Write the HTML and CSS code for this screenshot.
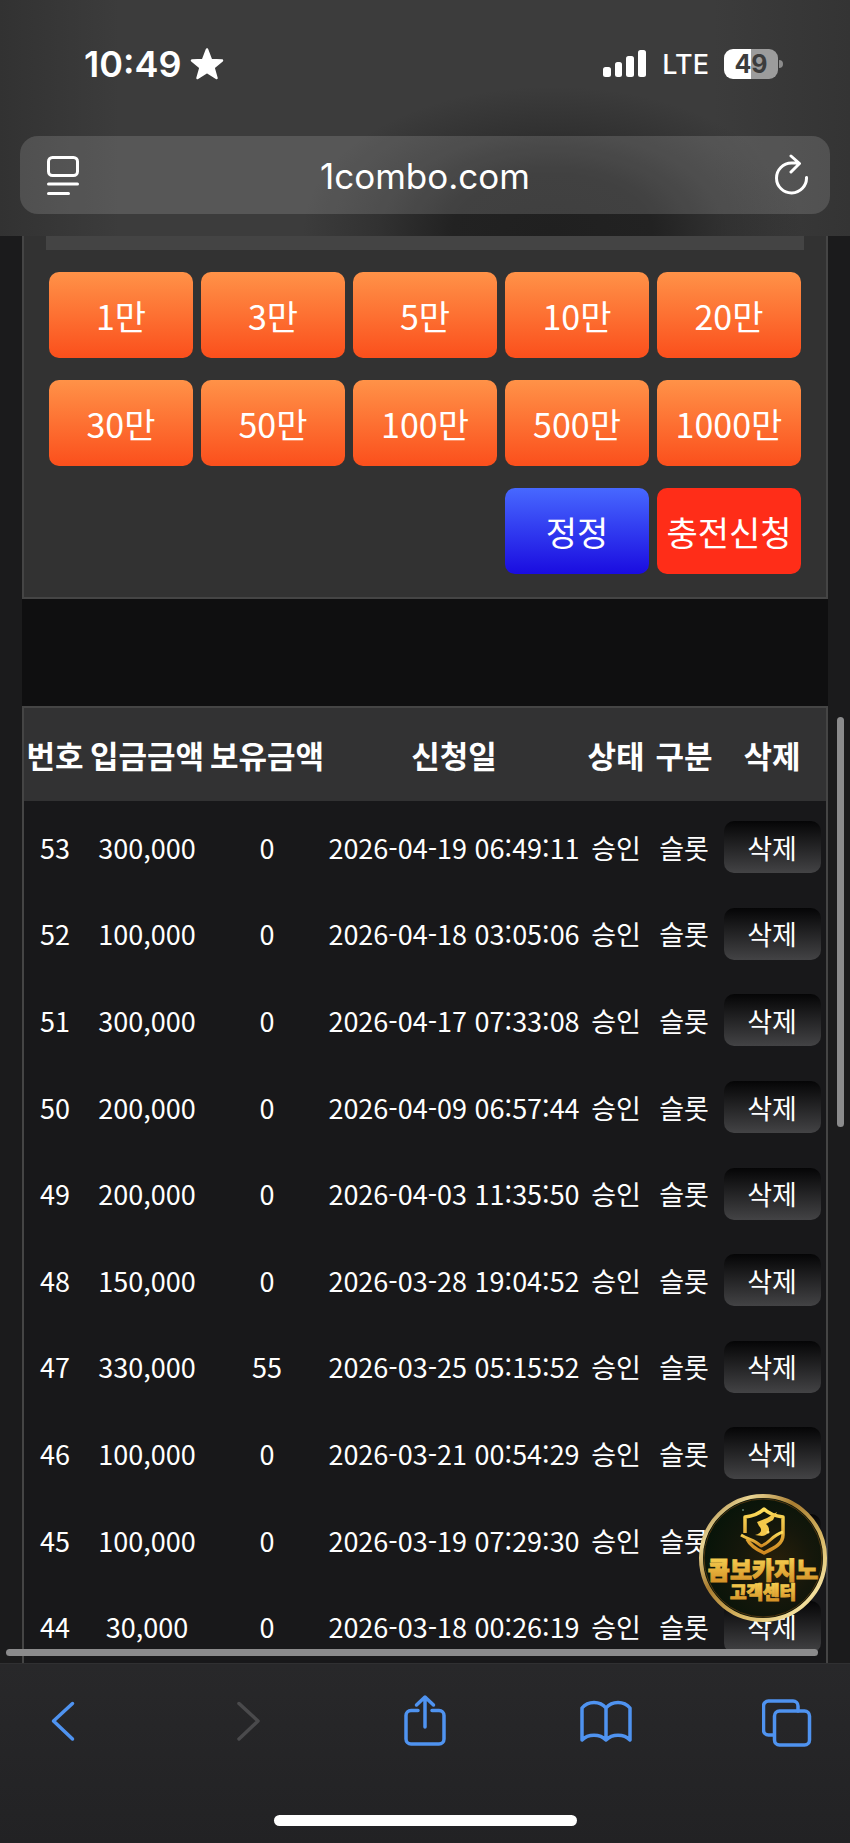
FILE: index.html
```html
<!DOCTYPE html>
<html lang="ko">
<head>
  <meta charset="UTF-8">
  <meta name="viewport" content="width=device-width, initial-scale=1.0">
  <title>1combo.com</title>
  <link rel="stylesheet" href="styles.css">
</head>
<body>
<header class="chrome">
  <div class="status">
    <div class="status-left">
      <span class="time">10:49</span>
      <svg width="34" height="34" viewBox="0 0 34 34"><path d="M17 2.500l4 10.500 11 .500-8.500 7 3 10.500L17 25 7.500 31l3-10.500L2 13.500 13 13z" fill="#fff" stroke="#fff" stroke-width="2.500" stroke-linejoin="round"/></svg>
    </div>
    <div class="status-right">
      <svg width="43" height="28" viewBox="0 0 43 28" fill="#fff">
        <rect x="0" y="17" width="8" height="10" rx="2.500"/>
        <rect x="12" y="12" width="7" height="15" rx="2.500"/>
        <rect x="23" y="6" width="8" height="21" rx="2.500"/>
        <rect x="35" y="0" width="8" height="27" rx="2.500"/>
      </svg>
      <span class="network">LTE</span>
      <span class="battery">49</span>
    </div>
  </div>
  <div class="address">
    <button class="icon-btn" aria-label="페이지 메뉴">
      <svg width="34" height="42" viewBox="0 0 34 42" fill="none" stroke="#fff" stroke-width="3" stroke-linecap="round"><rect x="2.500" y="3.500" width="29" height="18" rx="4"/><path d="M2.500 30h29M2.500 39.500h20"/></svg>
    </button>
    <input class="url" type="text" value="1combo.com" aria-label="주소">
    <button class="icon-btn" aria-label="새로고침">
      <svg width="34" height="42" viewBox="0 0 34 42" fill="none" stroke="#fff" stroke-width="3" stroke-linecap="round" stroke-linejoin="round"><path d="M32.500 23.500a15 15 0 1 1-15-14.500h7M17 2l8.500 7.500-8.500 8.500"/></svg>
    </button>
  </div>
</header>

<main class="page">
  <div class="sheet">
    <section class="panel">
      <div class="field"></div>
      <div class="amounts">
        <button class="btn">1만</button>
        <button class="btn">3만</button>
        <button class="btn">5만</button>
        <button class="btn">10만</button>
        <button class="btn">20만</button>
        <button class="btn">30만</button>
        <button class="btn">50만</button>
        <button class="btn">100만</button>
        <button class="btn">500만</button>
        <button class="btn">1000만</button>
        <button class="btn btn-reset">정정</button>
        <button class="btn btn-submit">충전신청</button>
      </div>
    </section>

    <table class="history">
      <colgroup>
        <col class="c-no"><col class="c-amount"><col class="c-hold"><col class="c-date"><col class="c-state"><col class="c-type"><col>
      </colgroup>
      <thead>
        <tr><th>번호</th><th>입금금액</th><th>보유금액</th><th>신청일</th><th>상태</th><th>구분</th><th>삭제</th></tr>
      </thead>
      <tbody>
        <tr><td>53</td><td>300,000</td><td>0</td><td>2026-04-19 06:49:11</td><td>승인</td><td>슬롯</td><td><button class="del">삭제</button></td></tr>
        <tr><td>52</td><td>100,000</td><td>0</td><td>2026-04-18 03:05:06</td><td>승인</td><td>슬롯</td><td><button class="del">삭제</button></td></tr>
        <tr><td>51</td><td>300,000</td><td>0</td><td>2026-04-17 07:33:08</td><td>승인</td><td>슬롯</td><td><button class="del">삭제</button></td></tr>
        <tr><td>50</td><td>200,000</td><td>0</td><td>2026-04-09 06:57:44</td><td>승인</td><td>슬롯</td><td><button class="del">삭제</button></td></tr>
        <tr><td>49</td><td>200,000</td><td>0</td><td>2026-04-03 11:35:50</td><td>승인</td><td>슬롯</td><td><button class="del">삭제</button></td></tr>
        <tr><td>48</td><td>150,000</td><td>0</td><td>2026-03-28 19:04:52</td><td>승인</td><td>슬롯</td><td><button class="del">삭제</button></td></tr>
        <tr><td>47</td><td>330,000</td><td>55</td><td>2026-03-25 05:15:52</td><td>승인</td><td>슬롯</td><td><button class="del">삭제</button></td></tr>
        <tr><td>46</td><td>100,000</td><td>0</td><td>2026-03-21 00:54:29</td><td>승인</td><td>슬롯</td><td><button class="del">삭제</button></td></tr>
        <tr><td>45</td><td>100,000</td><td>0</td><td>2026-03-19 07:29:30</td><td>승인</td><td>슬롯</td><td><button class="del">삭제</button></td></tr>
        <tr><td>44</td><td>30,000</td><td>0</td><td>2026-03-18 00:26:19</td><td>승인</td><td>슬롯</td><td><button class="del">삭제</button></td></tr>
      </tbody>
    </table>
  </div>

  <div class="scroll-y"></div>
  <div class="scroll-x"></div>

  <a class="support" href="#" aria-label="콤보카지노 고객센터">
    <svg width="130" height="130" viewBox="0 0 130 130">
      <defs>
        <linearGradient id="ring" x1="0" y1="0" x2="1" y2="1">
          <stop offset="0" stop-color="#8a6424"/>
          <stop offset=".2" stop-color="#e9d493"/>
          <stop offset=".4" stop-color="#a87c30"/>
          <stop offset=".65" stop-color="#d9b865"/>
          <stop offset=".85" stop-color="#f3df9c"/>
          <stop offset="1" stop-color="#a5782a"/>
        </linearGradient>
        <linearGradient id="gold" x1="0" y1="0" x2="0" y2="1">
          <stop offset="0" stop-color="#ffe05c"/>
          <stop offset="1" stop-color="#cf8820"/>
        </linearGradient>
        <radialGradient id="felt" cx=".6" cy=".55" r=".6">
          <stop offset="0" stop-color="#29200a"/>
          <stop offset=".5" stop-color="#15170b"/>
          <stop offset="1" stop-color="#071409"/>
        </radialGradient>
      </defs>
      <circle cx="65" cy="65" r="62" fill="url(#felt)" stroke="url(#ring)" stroke-width="4"/>
      <circle cx="65" cy="65" r="59" fill="none" stroke="#4d3510"/>
      <g fill="none" stroke="url(#gold)" stroke-width="3.500" stroke-linejoin="round">
        <path d="M47 40V24c8-1 14-3 19-8 5 5 11 7 19 8v18c0 9-9 13-19 18-9-4-14-8-17-14"/>
        <path d="M43 42c8 5 13 4 20 11 8-2 11-11 22-14" stroke-width="3"/>
      </g>
      <path d="M59 29l10-4 10-6-4 8-7 4c5 4 4 11-4 12l-7-1c6-1 8-5 4-9z" fill="#f4c84a"/>
      <circle cx="70" cy="39" r="1.500" fill="#ffe27a"/>
      <circle cx="45" cy="17" r="1" fill="#5c7a6a"/>
      <text class="support-name" x="65" y="86">콤보카지노</text>
      <text class="support-desc" x="65" y="106">고객센터</text>
    </svg>
  </a>
</main>

<footer class="toolbar">
  <nav class="tools">
    <button class="icon-btn" aria-label="뒤로">
      <svg width="50" height="54" viewBox="0 0 50 54"><path d="M34.500 9.500L15.500 27l19 18"/></svg>
    </button>
    <button class="icon-btn" aria-label="앞으로" disabled>
      <svg width="50" height="54" viewBox="0 0 50 54"><path d="M21 9.500L40 27 21 45"/></svg>
    </button>
    <button class="icon-btn" aria-label="공유">
      <svg width="50" height="54" viewBox="0 0 50 54"><path d="M20 16.500h-7a5 5 0 0 0-5 5V45a5 5 0 0 0 5 5h28a5 5 0 0 0 5-5V21.500a5 5 0 0 0-5-5h-7M27 33V4M18.500 11L27 3l8.500 8"/></svg>
    </button>
    <button class="icon-btn" aria-label="책갈피">
      <svg width="54" height="54" viewBox="0 0 54 54"><path d="M28 14C22 6.500 10 6.500 4 14v32c6-6.500 18-6.500 24 0 6-6.500 18-6.500 24 0V14c-6-7.500-18-7.500-24 0zv32"/></svg>
    </button>
    <button class="icon-btn" aria-label="탭">
      <svg width="50" height="54" viewBox="0 0 50 54"><rect x="12.500" y="17" width="35" height="34" rx="5"/><path d="M12 41H6.500a5 5 0 0 1-5-5V12a5 5 0 0 1 5-5H31a5 5 0 0 1 5 5v5"/></svg>
    </button>
  </nav>
  <div class="home"></div>
</footer>
</body>
</html>
```
FILE: styles.css
```css
* {
  box-sizing: border-box;
}
body {
  margin: 0;
  height: 100vh;
  display: flex;
  flex-direction: column;
  overflow: hidden;
  background-color: #1b1b1c;
  color: #fff;
  font-family: "Noto Sans CJK KR", sans-serif;
}
button {
  margin: 0;
  padding: 0;
  border: none;
  color: #fff;
  font-family: inherit;
  cursor: pointer;
}
svg {
  display: block;
}
.icon-btn {
  background: none;
}

/* browser top */
.chrome {
  padding-bottom: 22px;
  background: radial-gradient(ellipse 250px 145px at 65% 98%, #202020 0%, #222222 40%, rgba(34, 34, 34, 0.4) 70%, rgba(34, 34, 34, 0) 100%),
    linear-gradient(to right, #323232 0, #3c3c3c 14%, #3c3c3c 84%, #343434 100%);
  font-family: Inter, sans-serif;
}
.status {
  display: flex;
  justify-content: space-between;
  align-items: center;
  height: 128px;
  padding: 0 72px 0 84px;
}
.status-left,
.status-right {
  display: flex;
  align-items: center;
}
.status-left {
  gap: 9px;
}
.time {
  font-size: 36px;
  font-weight: 600;
}
.network {
  margin: 0 15px 0 16px;
  font-size: 27px;
  font-weight: 500;
}
.battery {
  position: relative;
  width: 54px;
  height: 30px;
  border-radius: 9px;
  background: linear-gradient(to right, #fff 50%, #9c9c9c 50%);
  color: #3c3c3c;
  font-size: 25px;
  font-weight: 700;
  line-height: 30px;
  text-align: center;
}
.battery::after {
  content: "";
  position: absolute;
  right: -5px;
  top: 11px;
  width: 4px;
  height: 8px;
  border-radius: 0 4px 4px 0;
  background-color: #8c8c8c;
}
.address {
  display: flex;
  align-items: center;
  height: 78px;
  margin: 8px 20px 0;
  padding: 0 22px 0 26px;
  border-radius: 18px;
  background-color: rgba(255, 255, 255, 0.14);
}
.url {
  flex: 1;
  min-width: 0;
  padding: 2px 4px 0 0;
  border: none;
  outline: none;
  background: none;
  color: #fff;
  font-family: inherit;
  font-size: 35px;
  text-align: center;
}

/* page */
.page {
  position: relative;
  flex: 1;
  min-height: 0;
  overflow: hidden;
}
.sheet {
  margin: 0 22px;
  background-color: #0f0f10;
}
.panel {
  padding: 0 22px 23px;
  border: 2px solid #454545;
  border-top: none;
  background-color: #323232;
}
.field {
  height: 14px;
  background-color: #444;
}
.amounts {
  display: grid;
  grid-template-columns: repeat(5, 1fr);
  gap: 22px 8px;
  padding: 22px 3px 0;
}
.btn {
  height: 86px;
  border-radius: 10px;
  background: linear-gradient(#ff9248, #fb4f1c);
  font-size: 34px;
  white-space: nowrap;
}
.btn-reset {
  grid-column: 4;
  background: linear-gradient(#4768ff, #1a0ce0);
}
.btn-submit {
  background: #ff2d18;
}

.history {
  width: 100%;
  height: 963px;
  margin-top: 107px;
  table-layout: fixed;
  border-collapse: separate;
  border-spacing: 0;
  border: 2px solid #454545;
  background-color: #18181a;
  text-align: center;
  white-space: nowrap;
}
.c-no {
  width: 62px;
}
.c-amount {
  width: 122px;
}
.c-hold {
  width: 118px;
}
.c-date {
  width: 256px;
}
.c-state,
.c-type {
  width: 68px;
}
.history th {
  height: 93px;
  padding: 0;
  background-color: #323233;
  font-size: 31px;
  font-weight: 700;
}
.history td {
  padding: 6px 0 0;
  font-size: 27px;
}
.del {
  display: block;
  width: 97px;
  height: 52px;
  margin: 0 auto;
  border-radius: 10px;
  background: linear-gradient(#050506, #434345);
  font-size: 27px;
}

.scroll-y,
.scroll-x {
  position: absolute;
  border-radius: 4px;
  background-color: #8b8b8c;
}
.scroll-y {
  top: 481px;
  right: 6px;
  width: 7px;
  height: 410px;
}
.scroll-x {
  left: 6px;
  right: 32px;
  bottom: 7px;
  height: 7px;
}
.support {
  position: absolute;
  right: 22px;
  bottom: 40px;
}
.support text {
  fill: url(#gold);
  stroke: url(#gold);
  font-weight: 900;
  text-anchor: middle;
}
.support-name {
  font-size: 24px;
  stroke-width: 1px;
}
.support-desc {
  font-size: 18px;
}

/* browser bottom */
.toolbar {
  height: 180px;
  padding: 30px 38px 17px;
  display: flex;
  flex-direction: column;
  justify-content: space-between;
  align-items: center;
  border-top: 1px solid #303032;
  background: linear-gradient(#28282a, #222224);
}
.tools {
  display: flex;
  justify-content: space-between;
  width: 100%;
}
.tools svg {
  fill: none;
  stroke: #4f93f0;
  stroke-width: 3.5px;
  stroke-linecap: round;
  stroke-linejoin: round;
}
.tools button:disabled svg {
  stroke: #4a4a4c;
}
.home {
  width: 303px;
  height: 11px;
  border-radius: 6px;
  background-color: #fff;
}
```
